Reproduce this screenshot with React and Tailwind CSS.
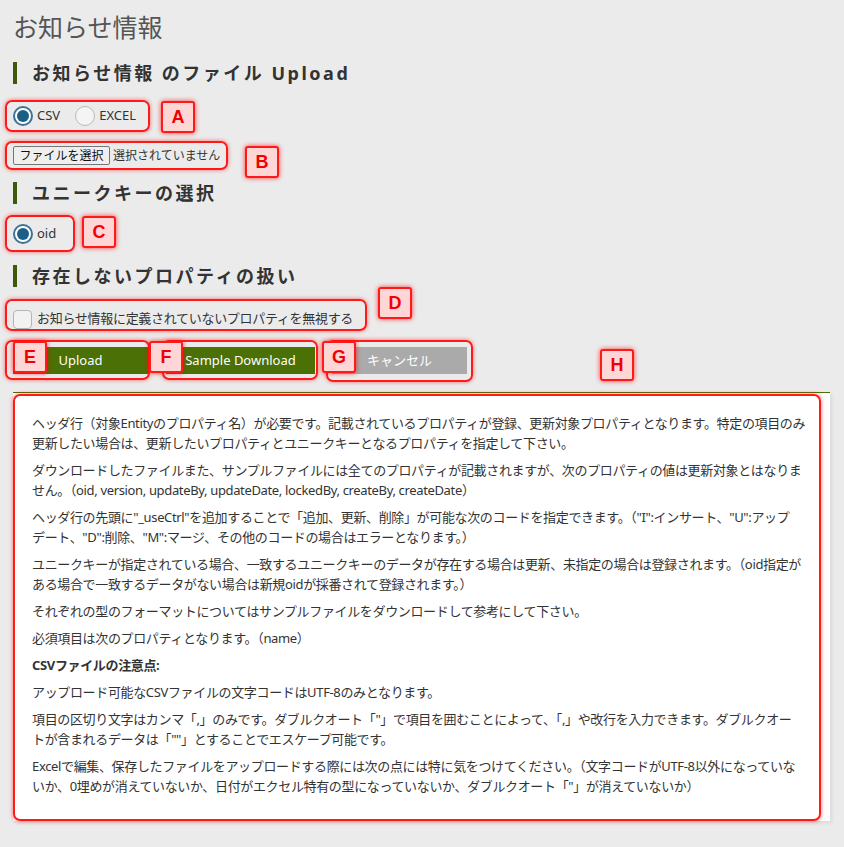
import React from 'react'

const FONT = { fontFamily: '"Noto Sans", "Noto Sans CJK JP", sans-serif' }

// annotation labels (page coordinates)
const marks = [
	{ id: 'A', cls: 'left-[161px] top-[101px]' },
	{ id: 'B', cls: 'left-[245px] top-[146px]' },
	{ id: 'C', cls: 'left-[82px] top-[216px]' },
	{ id: 'D', cls: 'left-[378px] top-[287px]' },
	{ id: 'E', cls: 'left-[13px] top-[341px]' },
	{ id: 'F', cls: 'left-[149px] top-[341px]' },
	{ id: 'G', cls: 'left-[322px] top-[341px]' },
	{ id: 'H', cls: 'left-[600px] top-[349px]' },
]

const Mark = ({ id, cls }) => (
	<div className={`absolute ${cls} w-[34px] h-[32px] flex items-center justify-center bg-[#ffd6d6] border-2 border-[#ff1a1a] rounded-[3px] shadow-[0_0_5px_rgba(255,0,0,0.75)] text-[#f00000] text-[18px] font-bold`}
		style={{ fontFamily: '"Liberation Sans", Arial, sans-serif' }}>
		{id}
	</div>
)

const Outline = ({ cls }) => (
	<div className={`absolute ${cls} border-2 border-[#ff1a1a] rounded-[7px] shadow-[0_0_4px_rgba(255,0,0,0.55)] pointer-events-none`} />
)

const Heading = ({ children, cls }) => (
	<div className={`flex items-stretch h-[22px] ${cls}`}>
		<div className="w-[4px] bg-[#3b5a0a]" />
		<div className="ml-[15px] flex items-center text-[18px] font-bold tracking-[2.5px] text-[#333] whitespace-nowrap">{children}</div>
	</div>
)

const Radio = ({ checked, label }) => (
	<label className="flex items-center gap-[4px]">
		{checked ? (
			<span className="flex-none w-[20px] h-[20px] rounded-full border-2 border-[#3b7398] bg-white flex items-center justify-center">
				<span className="w-[12px] h-[12px] rounded-full bg-[#1b5e86]" />
			</span>
		) : (
			<span className="flex-none w-[20px] h-[20px] rounded-full border border-[#b9b9b9] bg-[#f4f4f4]" />
		)}
		<span className="text-[13px] text-[#333]">{label}</span>
	</label>
)

const paras = [
	<>ヘッダ行（対象Entityのプロパティ名）が必要です。記載されているプロパティが登録、更新対象プロパティとなります。特定の項目のみ<br />更新したい場合は、更新したいプロパティとユニークキーとなるプロパティを指定して下さい。</>,
	<>ダウンロードしたファイルまた、サンプルファイルには全てのプロパティが記載されますが、次のプロパティの値は更新対象とはなりま<br />せん。（oid, version, updateBy, updateDate, lockedBy, createBy, createDate）</>,
	<>ヘッダ行の先頭に"_useCtrl"を追加することで「追加、更新、削除」が可能な次のコードを指定できます。（"I":インサート、"U":アップ<br />デート、"D":削除、"M":マージ、その他のコードの場合はエラーとなります。）</>,
	<>ユニークキーが指定されている場合、一致するユニークキーのデータが存在する場合は更新、未指定の場合は登録されます。（oid指定が<br />ある場合で一致するデータがない場合は新規oidが採番されて登録されます。）</>,
	<>それぞれの型のフォーマットについてはサンプルファイルをダウンロードして参考にして下さい。</>,
	<>必須項目は次のプロパティとなります。（name）</>,
	<b className="font-bold">CSVファイルの注意点:</b>,
	<>アップロード可能なCSVファイルの文字コードはUTF-8のみとなります。</>,
	<>項目の区切り文字はカンマ「,」のみです。ダブルクオート「"」で項目を囲むことによって、「,」や改行を入力できます。ダブルクオー<br />トが含まれるデータは「""」とすることでエスケープ可能です。</>,
	<>Excelで編集、保存したファイルをアップロードする際には次の点には特に気をつけてください。（文字コードがUTF-8以外になっていな<br />いか、0埋めが消えていないか、日付がエクセル特有の型になっていないか、ダブルクオート「"」が消えていないか）</>,
]

export default function App() {
	return (
		<div className="relative min-h-[847px] bg-[#ebebeb] text-[#333] pl-[13px] pr-[14px] pt-[8px] pb-[25px]" style={FONT}>
			<h1 className="h-[40px] flex items-center text-[25px] font-normal text-[#555]">お知らせ情報</h1>

			<Heading cls="mt-[14px]">お知らせ情報 のファイル Upload</Heading>

			<div className="relative mt-[20px] h-[24px] w-[127px] flex items-center gap-[15px]">
				<Outline cls="-left-[8px] -right-[10px] -top-[4px] -bottom-[4px]" />
				<Radio checked label="CSV" />
				<Radio label="EXCEL" />
			</div>

			<div className="relative mt-[18px] h-[19px] w-[208px] flex items-center whitespace-nowrap">
				<Outline cls="-left-[8px] -right-[7px] -top-[5px] -bottom-[5px]" />
				<button className="flex-none h-[19px] w-[97px] bg-[#efefef] border border-[#767676] rounded-[2px] text-[12px] leading-none text-[#111]">ファイルを選択</button>
				<span className="ml-[3px] text-[12px] text-[#333]">選択されていません</span>
			</div>

			<Heading cls="mt-[17px]">ユニークキーの選択</Heading>

			<div className="relative mt-[20px] h-[20px] w-[42px] flex items-center">
				<Outline cls="-left-[8px] -right-[20px] -top-[9px] -bottom-[8px]" />
				<Radio checked label="oid" />
			</div>

			<Heading cls="mt-[21px]">存在しないプロパティの扱い</Heading>

			<div className="relative mt-[22px] h-[20px] w-[339px] flex items-center gap-[5px]">
				<Outline cls="-left-[8px] -right-[15px] -top-[10px] -bottom-[2px]" />
				<span className="flex-none w-[19px] h-[19px] rounded-[4px] border border-[#b5b5b5] bg-[#f2f2f2]" />
				<span className="text-[13px] whitespace-nowrap tracking-[-0.3px]">お知らせ情報に定義されていないプロパティを無視する</span>
			</div>

			<div className="mt-[18px] h-[27px] flex items-center text-[13px] text-white">
				<div className="relative">
					<Outline cls="-left-[8px] -right-[2px] -top-[7px] -bottom-[6px]" />
					<button className="w-[135px] h-[27px] bg-[#4a7006]">Upload</button>
				</div>
				<div className="relative ml-[18px]">
					<Outline cls="-left-[4px] -right-[3px] -top-[7px] -bottom-[6px]" />
					<button className="w-[149px] h-[27px] bg-[#4a7006]">Sample Download</button>
				</div>
				<div className="relative ml-[17px]">
					<Outline cls="-left-[6px] -right-[6px] -top-[7px] -bottom-[8px]" />
					<button className="w-[135px] h-[27px] bg-[#aaaaaa]">キャンセル</button>
				</div>
			</div>

			<div className="relative mt-[18px] w-[817px] bg-white border-t border-[#4a7006] shadow-[2px_2px_4px_rgba(0,0,0,0.08)] pl-[19px] pr-[10px] pt-[20px] pb-[25px] text-[13px] leading-[20px] tracking-[-0.35px] text-[#333] whitespace-nowrap">
				<Outline cls="left-0 right-[9px] top-[1px] bottom-0" />
				<div className="flex flex-col gap-[7px]">
					{paras.map((p, i) => <p key={i}>{p}</p>)}
				</div>
			</div>

			{marks.map(m => <Mark key={m.id} {...m} />)}
		</div>
	)
}
